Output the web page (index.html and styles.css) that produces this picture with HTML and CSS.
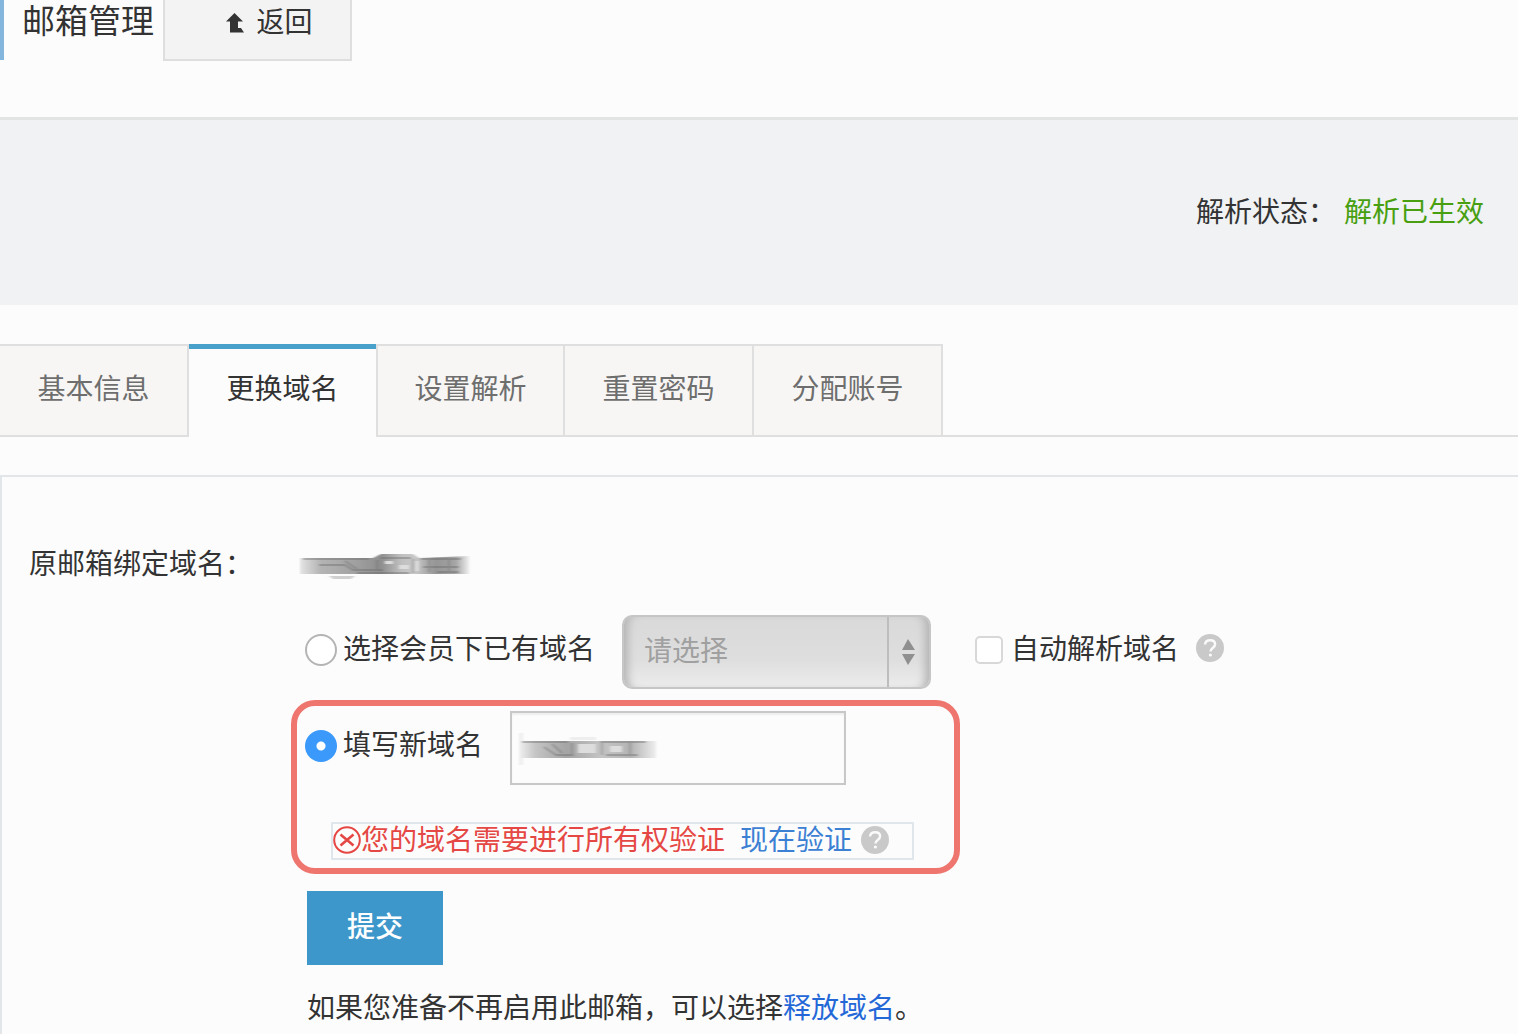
FILE: index.html
```html
<!DOCTYPE html>
<html lang="zh-CN">
<head>
<meta charset="utf-8">
<meta name="viewport" content="width=device-width, initial-scale=1">
<title>邮箱管理</title>
<link rel="stylesheet" href="styles.css">
</head>
<body>
<svg class="symbols" aria-hidden="true">
  <symbol id="help" viewBox="0 0 28 28">
    <circle cx="14" cy="14" r="14" fill="#c9c9c9"/>
    <path d="M9 10.500C9.300 7.600 11.400 6.300 14.200 6.300c2.900 0 4.900 1.600 4.900 4 0 3.700-4.600 3.700-4.600 7.200" fill="none" stroke="#fafafa" stroke-width="2.400"/>
    <circle cx="14.400" cy="21" r="1.600" fill="#fafafa"/>
  </symbol>
</svg>
<header class="header">
  <h1 class="title">邮箱管理</h1>
  <button class="back" type="button">
    <svg class="back-icon" viewBox="0 0 18 20" aria-hidden="true"><path d="M8.500 0L17 8.500H12V15H15L18 19.500H4V8.500H0Z" fill="#333"/></svg>
    返回
  </button>
</header>
<section class="status">
  <span>解析状态：</span>
  <span class="status-ok">解析已生效</span>
</section>
<nav class="tabs">
  <a class="tab" href="#info">基本信息</a>
  <a class="tab tab-active" href="#domain" aria-current="page">更换域名</a>
  <a class="tab" href="#dns">设置解析</a>
  <a class="tab" href="#password">重置密码</a>
  <a class="tab" href="#accounts">分配账号</a>
</nav>
<form class="panel">
  <div class="label">原邮箱绑定域名：</div>
  <div class="fields">
    <div class="current">
      <svg class="masked" width="172" height="28" viewBox="0 0 172 28" aria-hidden="true">
        <defs>
          <linearGradient id="mask-a"><stop offset="0" stop-color="#e4e4e4"/><stop offset=".12" stop-color="#b4b4b4"/><stop offset=".3" stop-color="#a4a4a4"/><stop offset=".48" stop-color="#8e8e8e"/><stop offset=".6" stop-color="#c0c0c0"/><stop offset=".68" stop-color="#c8c8c8"/><stop offset=".8" stop-color="#959595"/><stop offset=".92" stop-color="#a4a4a4"/><stop offset="1" stop-color="#eee"/></linearGradient>
          <filter id="soft"><feGaussianBlur stdDeviation="1.500 .6"/></filter>
        </defs>
        <g filter="url(#soft)">
          <path d="M1 7H74L82 3H114L120 7 170 5V23H1Z" fill="url(#mask-a)"/>
          <path d="M30 25H56L52 28H34Z" fill="#d0d0d0"/>
          <g fill="none" stroke="#666" stroke-opacity=".4" stroke-width="2"><path d="M4 8H70M20 14h26l8 5h30M46 10l12 8M82 7h30M122 8h40M124 16h36M58 22h52M138 21h22M78 9v11M114 8v14M130 9v12M150 9v12"/></g>
          <path d="M86 10h8v3h-8zM100 14h10v4h-10zM116 10h4v10h-4z" fill="#ddd"/>
        </g>
      </svg>
    </div>
    <div class="row">
      <label class="choice"><input class="radio" type="radio" name="source">选择会员下已有域名</label>
      <div class="select-wrap">
        <select class="select" aria-label="已有域名" disabled><option>请选择</option></select>
        <svg class="select-arrows" viewBox="0 0 44 70" aria-hidden="true"><path d="M1 0V70" stroke="#bdbdbd" stroke-width="2"/><path d="M21 22L28 33H15ZM15 37H28L21 48Z" fill="#8f8f8f"/></svg>
      </div>
      <label class="auto"><input class="check" type="checkbox">自动解析域名</label>
      <svg class="help help-wide" role="img" aria-label="帮助"><use href="#help"/></svg>
    </div>
    <div class="highlight">
      <div class="line">
        <label class="choice"><input class="radio" type="radio" name="source" checked>填写新域名</label>
        <div class="input-wrap">
          <input class="input" type="text" aria-label="新域名">
          <svg class="input-mask" width="140" height="32" viewBox="0 0 140 32" aria-hidden="true">
            <defs>
              <linearGradient id="mask-b"><stop offset="0" stop-color="#f0f0f0"/><stop offset=".12" stop-color="#c4c4c4"/><stop offset=".35" stop-color="#a4a4a4"/><stop offset=".6" stop-color="#c4c4c4"/><stop offset=".82" stop-color="#b4b4b4"/><stop offset="1" stop-color="#eee"/></linearGradient>
            </defs>
            <g filter="url(#soft)">
              <path d="M1 8H138V25H1Z" fill="url(#mask-b)"/>
              <path d="M52 4H78V7H52ZM1 0H5V8H1ZM1 25H5V32H1Z" fill="#eee"/>
              <g fill="none" stroke="#666" stroke-opacity=".4" stroke-width="2"><path d="M4 9H50M26 14l12 8h18M34 11l10 9M82 9h46M88 22h32M54 10v13M84 10v12M112 10v12"/></g>
              <path d="M60 11h18v9h-18zM92 13h12v6h-12z" fill="#ddd"/>
            </g>
          </svg>
        </div>
      </div>
      <div class="error" role="alert">
        <svg class="error-icon" viewBox="0 0 28 28" aria-hidden="true"><g fill="none" stroke="#e54844" stroke-width="2"><circle cx="14" cy="14" r="12.800"/><path d="M7.500 8.500L20.500 19.500M20.500 8.500L7.500 19.500" stroke-width="2.600"/></g></svg>
        <span>您的域名需要进行所有权验证</span>
        <a class="verify" href="#verify">现在验证</a>
        <svg class="help" role="img" aria-label="帮助"><use href="#help"/></svg>
      </div>
    </div>
    <button class="submit" type="submit">提交</button>
    <p class="note">如果您准备不再启用此邮箱，可以选择<a class="release" href="#release">释放域名</a>。</p>
  </div>
</form>
</body>
</html>
```
FILE: styles.css
```css
* { box-sizing: border-box; }

body {
  margin: 0;
  min-height: 100vh;
  display: flex;
  flex-direction: column;
  background: #fcfcfc;
  color: #333;
  font-family: "Liberation Sans", "Noto Sans CJK SC", sans-serif;
  font-size: 28px;
  line-height: 40px;
}

button, input, select { font: inherit; color: inherit; margin: 0; }
a { color: inherit; text-decoration: none; }
.symbols { position: absolute; width: 0; height: 0; }

.header {
  display: flex;
  align-items: flex-start;
  gap: 8px;
  padding-bottom: 56px;
  border-bottom: 3px solid #e2e4e4;
}
.title {
  margin: 0;
  padding: 0 1px 16px 18px;
  border-left: 4px solid #84b5dd;
  font-size: 33px;
  font-weight: 400;
  line-height: 44px;
}
.back {
  display: flex;
  align-items: center;
  justify-content: center;
  gap: 12px;
  width: 189px;
  height: 61px;
  padding: 0 0 14px 24px;
  border: 2px solid #dedede;
  border-top: 0;
  background: #f3f3f3;
}
.back-icon { width: 18px; height: 20px; }

.status {
  display: flex;
  justify-content: flex-end;
  align-items: center;
  gap: 8px;
  min-height: 185px;
  padding: 0 34px;
  background: #f0f2f4;
}
.status-ok { color: #48a010; }

.tabs {
  display: flex;
  margin-top: 39px;
  border-bottom: 2px solid #dfdfdf;
}
.tab {
  width: 189px;
  height: 91px;
  padding-top: 24px;
  border-top: 2px solid #dfdfdf;
  border-right: 2px solid #dfdfdf;
  background: #f7f6f4;
  color: #6e6e6e;
  text-align: center;
}
.tab-active {
  width: 187px;
  height: 93px;
  margin-bottom: -2px;
  padding-top: 21px;
  border-top: 5px solid #47a1cb;
  border-right: 0;
  background: #fcfcfc;
  color: #333;
}
.tab-active + .tab { border-left: 2px solid #dfdfdf; }

.panel {
  flex: 1;
  display: grid;
  grid-template-columns: 262px 1fr;
  align-content: start;
  margin-top: 38px;
  padding: 68px 0 0 27px;
  border: solid #e3e6e9;
  border-width: 2px 0 0 2px;
}
.current { display: flex; align-items: center; height: 40px; padding-left: 8px; }
.row {
  display: flex;
  align-items: center;
  margin-top: 30px;
  padding-left: 14px;
}
.choice {
  display: flex;
  align-items: center;
  gap: 6px;
  margin-right: 27px;
  padding-bottom: 4px;
}
.radio {
  appearance: none;
  width: 32px;
  height: 32px;
  border: 2px solid #b4b4b4;
  border-radius: 50%;
  background: #fff;
}
.radio:checked {
  border: 0;
  background: radial-gradient(circle, #fff 4px, #3a99fb 5px);
}

.select-wrap { position: relative; }
.select {
  appearance: none;
  display: block;
  width: 309px;
  height: 74px;
  padding: 0 20px;
  border: 2px solid #c6c6c6;
  border-radius: 10px;
  background: linear-gradient(#d9d9d9, #dedede 60%, #ececec);
  box-shadow: inset 10px 0 8px -6px #b4b4b4, inset -10px 0 8px -6px #b4b4b4;
  color: #a0a0a0;
  opacity: 1;
}
.select-arrows {
  position: absolute;
  top: 2px;
  right: 0;
  width: 44px;
  height: 70px;
}

.auto {
  display: flex;
  align-items: center;
  gap: 8px;
  margin-left: 44px;
  padding-bottom: 4px;
}
.check {
  appearance: none;
  width: 28px;
  height: 28px;
  border: 2px solid #d8d8d8;
  border-radius: 5px;
  background: #fff;
}
.help { width: 28px; height: 28px; }
.help-wide { margin: 0 0 8px 17px; }

.highlight {
  width: 669px;
  margin-top: 11px;
  padding: 5px 8px 8px;
  border: 6px solid #ee766f;
  border-radius: 24px;
}
.line { display: flex; align-items: center; }
.input-wrap { position: relative; }
.input {
  display: block;
  width: 336px;
  height: 74px;
  padding: 0 10px;
  border: 2px solid #c8c8c8;
  background: #fcfcfc;
  box-shadow: inset 0 2px 2px #eee;
}
.input-mask { position: absolute; left: 8px; top: 22px; }

.error {
  display: flex;
  align-items: center;
  width: 583px;
  height: 38px;
  margin: 37px 0 0 26px;
  padding-bottom: 2px;
  border: 2px solid #dfe6ec;
  color: #e54844;
}
.error span, .verify { padding-top: 2px; }
.error-icon { width: 28px; height: 28px; }
.verify { margin: 0 9px 0 15px; color: #3c80d4; }

.submit {
  display: block;
  width: 136px;
  height: 74px;
  margin: 17px 0 0 16px;
  padding: 0;
  border: 0;
  background: #3e97cb;
  color: #fff;
  font-weight: 500;
}
.note { margin: 24px 0 0 16px; }
.release { color: #2468d8; }
```
